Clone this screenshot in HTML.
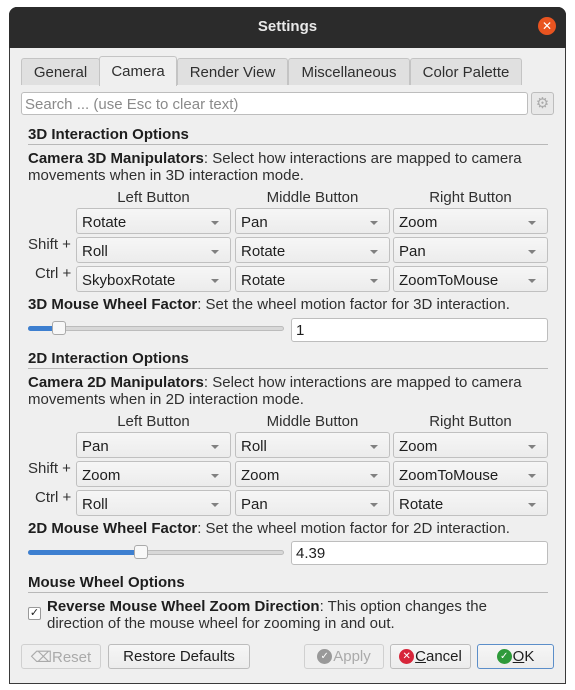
<!DOCTYPE html>
<html><head><style>
*{box-sizing:border-box;margin:0;padding:0}
body{width:575px;height:690px;background:#fff;font-family:"Liberation Sans",sans-serif;font-size:15px;color:#2f2f2f;position:relative;overflow:hidden}
.a{position:absolute;white-space:nowrap}
#win{position:absolute;left:9px;top:7px;width:557px;height:677px;background:#efefef;border:1px solid #3a3a3a;border-radius:8px 8px 0 0;overflow:hidden}
#tb{position:absolute;left:9px;top:7px;width:557px;height:41px;background:#2b2b2b;border-radius:8px 8px 0 0;color:#e8e8e8;font-weight:bold;text-align:center;line-height:40px;font-size:15px}
#close{position:absolute;left:538px;top:17px;width:18px;height:18px;border-radius:50%;background:#e95420;color:#fff;font-size:12px;line-height:18px;text-align:center;font-weight:normal}
.tab{position:absolute;top:58px;height:27px;background:#e0e0e0;border:1px solid #c4c4c4;border-bottom:none;text-align:center;line-height:28px;border-radius:3px 3px 0 0}
.tab.sel{background:#efefef;top:56px;height:30px;line-height:29px}
.box{position:absolute;background:#fff;border:1px solid #bdbdbd;border-radius:3px}
.cb{position:absolute;height:26px;width:155px;background:linear-gradient(#f6f6f6,#ececec);border:1px solid #c0c0c0;border-radius:3px;padding-left:5px;line-height:27px;color:#1e1e1e}
.cb:after{content:"";position:absolute;right:11px;top:12px;border-left:4px solid transparent;border-right:4px solid transparent;border-top:4px solid #808080}
b{color:#1e1e1e}
.hd{position:absolute;left:28px;width:520px;font-weight:bold;color:#1e1e1e;border-bottom:1px solid #b8b8b8;height:19px}
.btn{position:absolute;top:644px;height:25px;border:1px solid #bcbcbc;border-radius:3px;background:linear-gradient(#f6f6f6,#ececec);display:flex;align-items:center;justify-content:center;color:#1e1e1e}
.ic{display:inline-block;width:15px;height:15px;border-radius:50%;color:#fff;font-size:10px;line-height:15px;text-align:center;margin-right:1px}
.ctr{text-align:center;position:absolute}
.track{position:absolute;left:28px;width:256px;height:5px;border-radius:3px;background:#d8d8d8;border:1px solid #bcbcbc}
.fill{position:absolute;left:28px;height:5px;border-radius:3px;background:#3d7fd0}
.hdl{position:absolute;width:14px;height:14px;border-radius:3px;background:#f8f8f8;border:1px solid #aaa}
</style></head><body>
<div id="win"></div>
<div id="tb">Settings</div>
<div id="close">✕</div>

<div class="tab" style="left:21px;width:79px">General</div>
<div class="tab" style="left:177px;width:111px">Render View</div>
<div class="tab" style="left:288px;width:122px">Miscellaneous</div>
<div class="tab" style="left:410px;width:112px">Color Palette</div>
<div class="tab sel" style="left:99px;width:78px">Camera</div>

<div class="box" style="left:21px;top:92px;width:507px;height:23px;color:#8a8a8a;padding-left:3px;line-height:23px">Search ... (use Esc to clear text)</div>
<div class="box" style="left:531px;top:92px;width:23px;height:23px;background:#e8e8e8;color:#aaa;text-align:center;line-height:21px;font-size:15px">⚙</div>

<div class="hd" style="top:126px">3D Interaction Options</div>
<div class="a" style="left:28px;top:150px;line-height:17px"><b>Camera 3D Manipulators</b>: Select how interactions are mapped to camera<br>movements when in 3D interaction mode.</div>
<div class="ctr" style="left:76px;width:155px;top:189px">Left Button</div>
<div class="ctr" style="left:235px;width:155px;top:189px">Middle Button</div>
<div class="ctr" style="left:393px;width:155px;top:189px">Right Button</div>
<div class="cb" style="left:76px;top:208px">Rotate</div>
<div class="cb" style="left:235px;top:208px">Pan</div>
<div class="cb" style="left:393px;top:208px">Zoom</div>
<div class="a" style="left:28px;top:236px">Shift +</div>
<div class="cb" style="left:76px;top:237px">Roll</div>
<div class="cb" style="left:235px;top:237px">Rotate</div>
<div class="cb" style="left:393px;top:237px">Pan</div>
<div class="a" style="left:35px;top:265px">Ctrl +</div>
<div class="cb" style="left:76px;top:266px">SkyboxRotate</div>
<div class="cb" style="left:235px;top:266px">Rotate</div>
<div class="cb" style="left:393px;top:266px">ZoomToMouse</div>
<div class="a" style="left:28px;top:296px"><b>3D Mouse Wheel Factor</b>: Set the wheel motion factor for 3D interaction.</div>
<div class="track" style="top:326px"></div>
<div class="fill" style="top:326px;width:32px"></div>
<div class="hdl" style="left:52px;top:321px"></div>
<div class="box" style="left:291px;top:318px;width:257px;height:24px;padding-left:4px;line-height:24px;color:#1e1e1e">1</div>

<div class="hd" style="top:350px">2D Interaction Options</div>
<div class="a" style="left:28px;top:374px;line-height:17px"><b>Camera 2D Manipulators</b>: Select how interactions are mapped to camera<br>movements when in 2D interaction mode.</div>
<div class="ctr" style="left:76px;width:155px;top:413px">Left Button</div>
<div class="ctr" style="left:235px;width:155px;top:413px">Middle Button</div>
<div class="ctr" style="left:393px;width:155px;top:413px">Right Button</div>
<div class="cb" style="left:76px;top:432px">Pan</div>
<div class="cb" style="left:235px;top:432px">Roll</div>
<div class="cb" style="left:393px;top:432px">Zoom</div>
<div class="a" style="left:28px;top:460px">Shift +</div>
<div class="cb" style="left:76px;top:461px">Zoom</div>
<div class="cb" style="left:235px;top:461px">Zoom</div>
<div class="cb" style="left:393px;top:461px">ZoomToMouse</div>
<div class="a" style="left:35px;top:489px">Ctrl +</div>
<div class="cb" style="left:76px;top:490px">Roll</div>
<div class="cb" style="left:235px;top:490px">Pan</div>
<div class="cb" style="left:393px;top:490px">Rotate</div>
<div class="a" style="left:28px;top:520px"><b>2D Mouse Wheel Factor</b>: Set the wheel motion factor for 2D interaction.</div>
<div class="track" style="top:550px"></div>
<div class="fill" style="top:550px;width:114px"></div>
<div class="hdl" style="left:134px;top:545px"></div>
<div class="box" style="left:291px;top:541px;width:257px;height:24px;padding-left:4px;line-height:24px;color:#1e1e1e">4.39</div>

<div class="hd" style="top:574px">Mouse Wheel Options</div>
<div class="box" style="left:28px;top:607px;width:13px;height:13px;border-color:#999;font-size:11px;line-height:11px;text-align:center;color:#1e1e1e;border-radius:2px">✓</div>
<div class="a" style="left:47px;top:598px;line-height:17px"><b>Reverse Mouse Wheel Zoom Direction</b>: This option changes the<br>direction of the mouse wheel for zooming in and out.</div>

<div class="btn" style="left:21px;width:80px;color:#aaa;background:#efefef;border-color:#d0d0d0">⌫Reset</div>
<div class="btn" style="left:108px;width:142px">Restore Defaults</div>
<div class="btn" style="left:304px;width:80px;color:#aaa;background:#efefef;border-color:#d0d0d0"><span class="ic" style="background:#999">✓</span>Apply</div>
<div class="btn" style="left:390px;width:81px"><span class="ic" style="background:#d7263a">✕</span><u>C</u>ancel</div>
<div class="btn" style="left:477px;width:77px;border-color:#5b8ec9"><span class="ic" style="background:#2e9a3a">✓</span><u>O</u>K</div>
</body></html>
